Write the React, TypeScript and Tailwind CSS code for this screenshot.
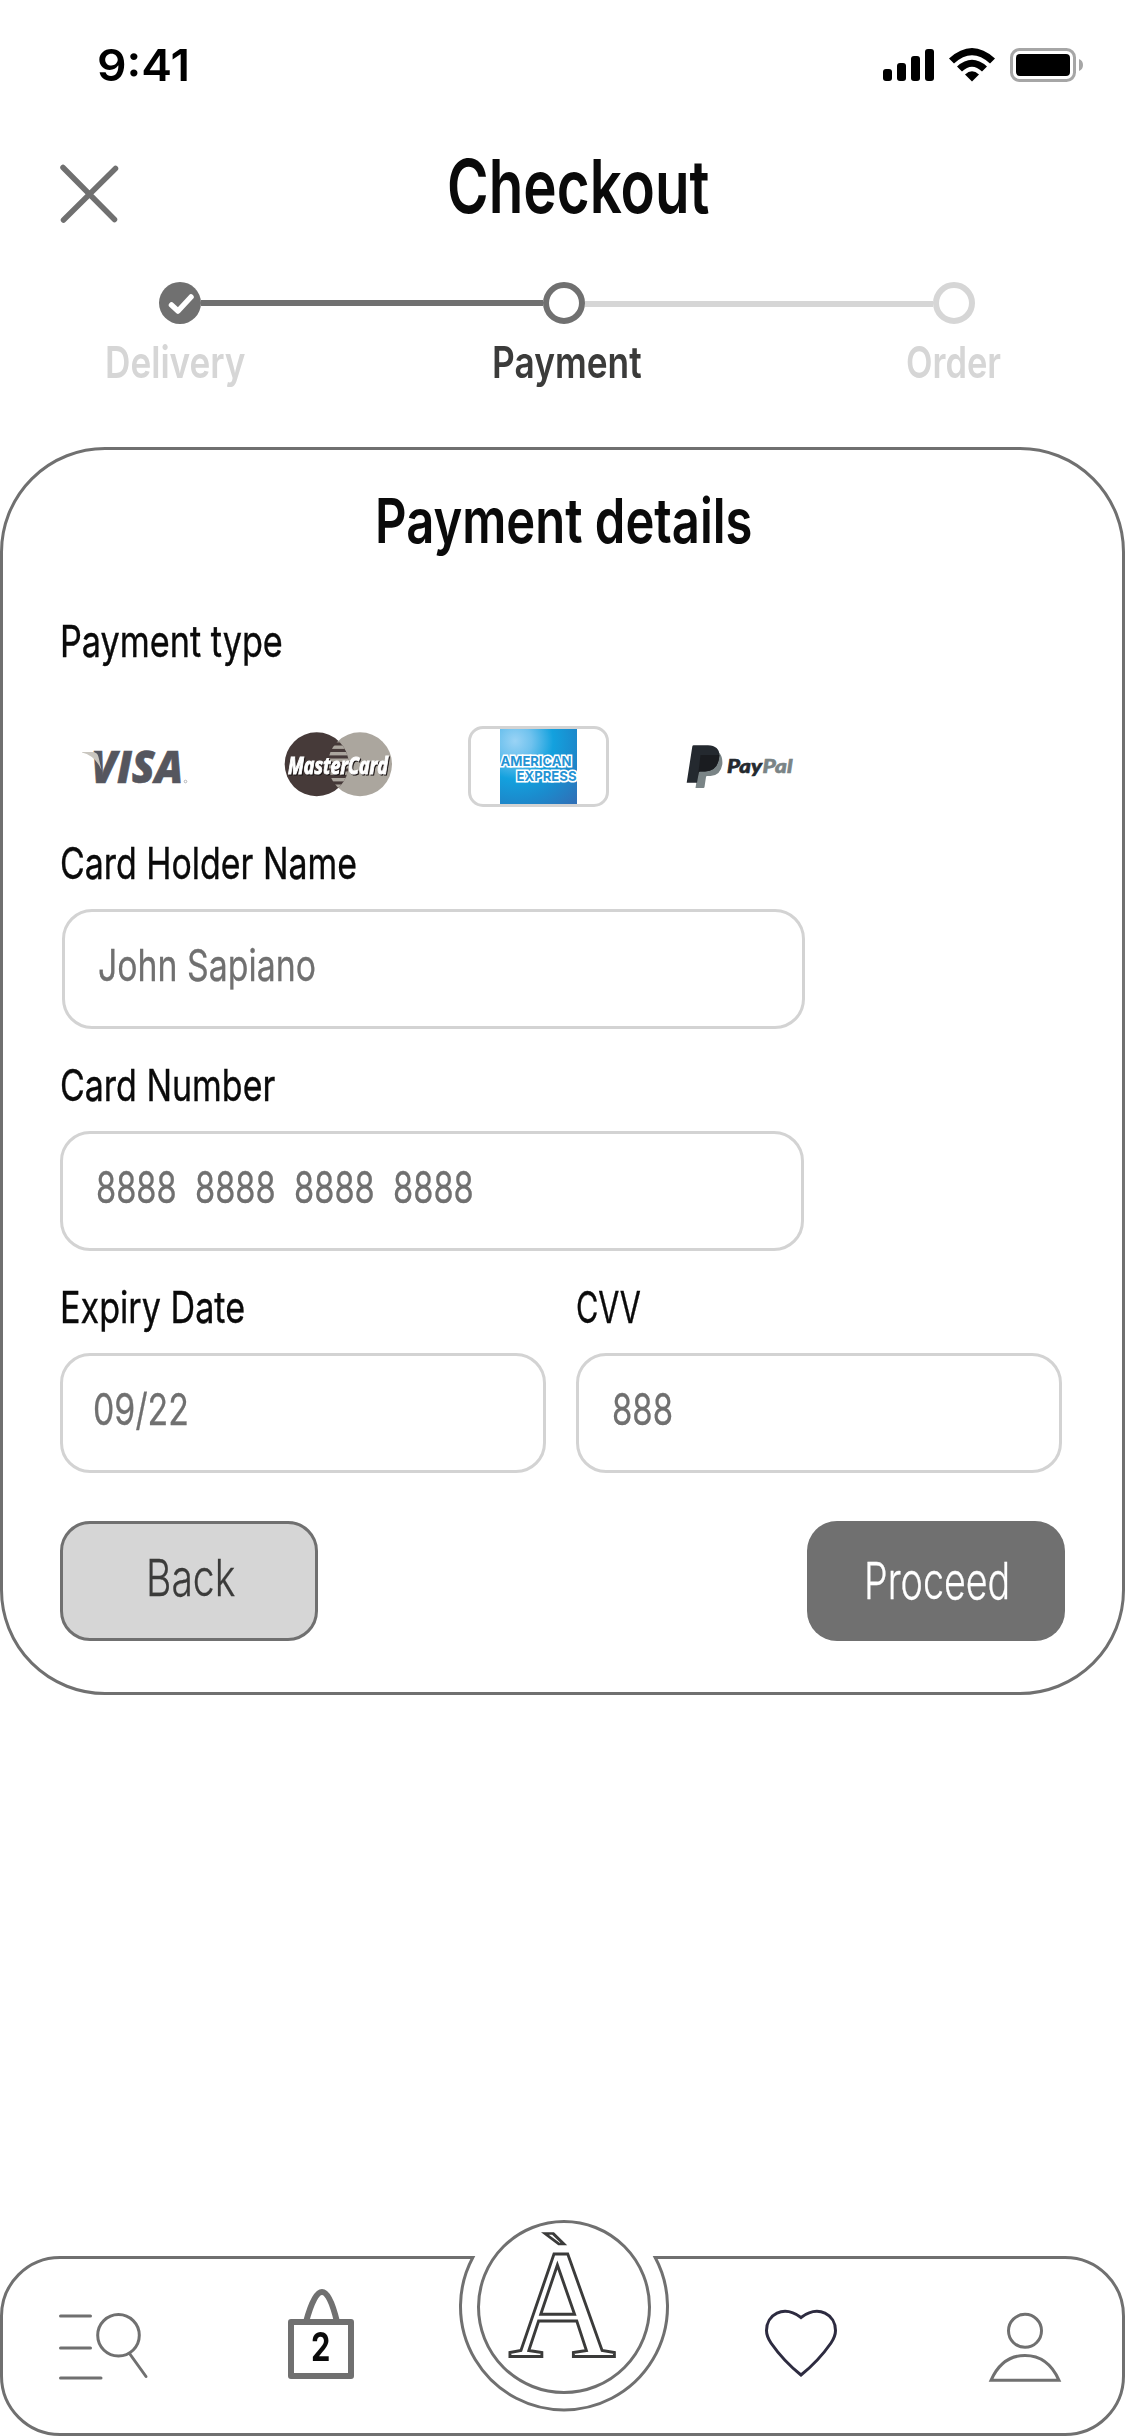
import React from 'react';

// Condensed text: the outer box reserves the visible width, the inner one is squeezed horizontally.
function Txt({ c, w, children }: { c: string; w: string; children: React.ReactNode }) {
  return (
    <span className={'block shrink-0 ' + w}>
      <span className={'inline-block origin-left whitespace-pre ' + c}>{children}</span>
    </span>
  );
}

const label = 'text-[44.4px] leading-[48px] font-normal text-[#0a0a0a] [-webkit-text-stroke:0.4px] ';
const value = 'text-[44px] leading-[48px] font-normal text-[#707070] [-webkit-text-stroke:0.3px] ';
const step = 'text-[44.4px] leading-[48px] font-semibold ';
const field = 'flex h-[120px] items-center rounded-[30px] border-[3px] border-[#d3d3d3] pb-2 ';

function StatusBar() {
  return (
    <div className="flex h-[130px] shrink-0 items-center pl-[97px] pr-[42px]">
      <Txt w="w-[100px]" c="scale-x-[1.05] text-[44px] leading-[48px] font-semibold text-black">9:41</Txt>
      <svg className="ml-auto" width="200" height="34" viewBox="0 0 200 34">
        <rect x="0" y="21" width="9" height="12" rx="3" />
        <rect x="14" y="15" width="9" height="18" rx="3" />
        <rect x="28" y="8" width="9" height="25" rx="3" />
        <rect x="42" y="1" width="9" height="32" rx="3" />
        <path d="M66 10.5Q89 -10.5 112 10.5L107 15.5Q89 -1 71 15.5Z" />
        <path d="M74 18.5Q89 5 104 18.5L99 23.5Q89 14 79 23.5Z" />
        <path d="M82 26.5Q89 20 96 26.5L89 33.5Z" />
        <rect x="128.5" y="1.5" width="63" height="31" rx="8" fill="none" stroke="#a6a6a6" strokeWidth="3" />
        <rect x="133" y="6" width="54" height="22" rx="4" />
        <path d="M196 11q4 1.500 4 6t-4 6z" fill="#a6a6a6" />
      </svg>
    </div>
  );
}

function Stepper() {
  return (
    <>
      <div className="flex h-[95px] shrink-0 items-center pt-[39px] pb-[14px] pl-[159px]">
        <svg width="42" height="42" viewBox="0 0 42 42">
          <circle cx="21" cy="21" r="21" fill="#707070" />
          <path d="M12.500 23l6.500 6 13-14" fill="none" stroke="#fff" strokeWidth="5.500" strokeLinecap="round" strokeLinejoin="round" />
        </svg>
        <div className="h-[6px] w-[342px] bg-[#707070]" />
        <div className="size-[42px] rounded-full border-[6px] border-[#707070]" />
        <div className="mt-[2px] h-[6px] w-[348px] bg-[#d6d6d6]" />
        <div className="size-[42px] rounded-full border-[6px] border-[#d6d6d6]" />
      </div>
      <div className="flex h-[48px] shrink-0 pl-[105px]">
        <Txt w="w-[387px]" c={step + 'scale-x-[.792] text-[#d6d6d6]'}>Delivery</Txt>
        <Txt w="w-[414px]" c={step + 'scale-x-[.795] text-[#3b3b3a]'}>Payment</Txt>
        <Txt w="w-[100px]" c={step + 'scale-x-[.777] text-[#d6d6d6]'}>Order</Txt>
      </div>
    </>
  );
}

function Visa() {
  return (
    <svg className="overflow-visible" width="107" height="81" viewBox="0 0 107 81">
      <text x="10" y="57.300" textLength="92" lengthAdjust="spacingAndGlyphs" fill="#55565e" stroke="#55565e" strokeWidth=".6" fontFamily="Open Sans, sans-serif" fontStyle="italic" fontWeight="800" fontSize="43.400">VISA</text>
      <path d="M1 26h10q5.500 0 6.500 5l3 13Q14 29.500 1 26.500z" fill="#c9c6bf" />
      <circle cx="104.500" cy="55.500" r="1.300" fill="none" stroke="#a5a5a8" strokeWidth=".8" />
    </svg>
  );
}

function MasterCard() {
  const stripes = [13, 19.5, 26, 32.5, 39, 45.5, 52, 58.5];
  return (
    <svg className="overflow-visible" width="109" height="81" viewBox="0 0 109 81">
      <defs>
        <clipPath id="mcl"><circle cx="32.700" cy="38.300" r="32" /></clipPath>
        <clipPath id="mcr"><circle cx="76" cy="38.300" r="32" /></clipPath>
      </defs>
      <circle cx="76" cy="38.300" r="32" fill="#aba69e" />
      <circle cx="32.700" cy="38.300" r="32" fill="#463a39" />
      <g clipPath="url(#mcl)">
        <g clipPath="url(#mcr)">
          {stripes.map((y) => <rect key={y} x="44" y={y} width="22" height="3.400" fill="#aba69e" />)}
        </g>
      </g>
      <g fontFamily="Open Sans, sans-serif" fontStyle="italic" fontWeight="700" fontSize="22.500">
        <text x="4" y="47.500" textLength="100" lengthAdjust="spacingAndGlyphs" fill="#fff" stroke="#fff" strokeWidth="1" className="[filter:drop-shadow(1.5px_1.5px_0_#1b1515)]">MasterCard</text>
      </g>
    </svg>
  );
}

function Amex() {
  return (
    <div className="flex h-[81px] w-[141px] rounded-[15px] border-[3px] border-[#d3d3d3] pl-[29px]">
      <svg width="77" height="75" viewBox="0 0 77 75">
        <defs>
          <radialGradient id="ax" gradientUnits="userSpaceOnUse" cx="15" cy="12" r="85">
            <stop offset="0" stopColor="#9ad3f5" />
            <stop offset=".2" stopColor="#6fc2ee" />
            <stop offset=".45" stopColor="#13a1de" />
            <stop offset=".7" stopColor="#1b8bcd" />
            <stop offset="1" stopColor="#2f71b8" />
          </radialGradient>
        </defs>
        <rect width="77" height="75" fill="url(#ax)" />
        <g fontFamily="Inter, sans-serif" fontWeight="700" fontSize="13.600" fill="#2493d4" stroke="#fff" strokeWidth="3.200" paintOrder="stroke" strokeLinejoin="miter" strokeMiterlimit="2">
          <text x=".5" y="36.800" textLength="71" lengthAdjust="spacingAndGlyphs">AMERICAN</text>
          <text x="16.500" y="52.300" textLength="60" lengthAdjust="spacingAndGlyphs">EXPRESS</text>
        </g>
      </svg>
    </div>
  );
}

function PayPal() {
  return (
    <svg className="overflow-visible" width="107" height="81" viewBox="0 0 107 81">
      <path d="M14.500 29L33.300 27Q37 31 36.300 38.500Q34.500 49.500 24.500 50h-3.500q-.8 0-1 1L18.500 61Q18.300 62 17.500 62H9.500z" fill="#7a8486" />
      <path d="M6.300 20.500Q6.500 19.300 7.700 19.300H22Q33.500 19.800 33.400 29.500 32.500 45 19 45.500H14q-1 0-1.200 1L11 56.800H.7z" fill="#24292f" />
      <path d="M14.500 29H33.400Q32.500 45 19 45.500H14q-1 0-1.200 1L12 50z" fill="#1a1c20" />
      <g fontFamily="Lato, sans-serif" fontStyle="italic" fontWeight="900" fontSize="19.300" strokeWidth=".6">
        <text x="41" y="46.700" textLength="35" lengthAdjust="spacingAndGlyphs" fill="#24292f" stroke="#24292f">Pay</text>
        <text x="76.500" y="46.700" textLength="30" lengthAdjust="spacingAndGlyphs" fill="#7a8486" stroke="#7a8486">Pal</text>
      </g>
    </svg>
  );
}

function PaymentCard() {
  return (
    <section className="mt-[61px] flex h-[1248px] shrink-0 flex-col rounded-[105px] border-[3px] border-[#707070] pt-[39px] pl-[57px] pr-[57px]">
      <div className="flex pl-[315px]">
        <Txt w="w-[376px]" c="scale-x-[.791] text-[61.9px] leading-[64px] font-semibold text-[#0a0a0a]">Payment details</Txt>
      </div>
      <div className="mt-16 flex"><Txt w="w-[222px]" c={label + 'scale-x-[.771]'}>Payment type</Txt></div>
      <div className="mt-[61px] flex pl-[21px]">
        <Visa />
        <div className="ml-[96px]"><MasterCard /></div>
        <div className="ml-[75px]"><Amex /></div>
        <div className="ml-[77px]"><PayPal /></div>
      </div>
      <div className="mt-8 flex"><Txt w="w-[300px]" c={label + 'scale-x-[.764]'}>Card Holder Name</Txt></div>
      <div className={field + 'mt-[22px] ml-[2px] w-[743px] pl-[33px]'}><Txt w="w-[220px]" c={value + 'scale-x-[.769]'}>John Sapiano</Txt></div>
      <div className="mt-8 flex"><Txt w="w-[220px]" c={label + 'scale-x-[.765]'}>Card Number</Txt></div>
      <div className={field + 'mt-[22px] w-[744px] pl-[33px]'}><Txt w="w-[376px]" c={value + 'scale-x-[.741]'}>8888  8888  8888  8888</Txt></div>
      <div className="mt-8 flex gap-[30px]">
        <div className="w-[486px]">
          <Txt w="w-[190px]" c={label + 'scale-x-[.769]'}>Expiry Date</Txt>
          <div className={field + 'mt-[22px] pl-[30px]'}><Txt w="w-[100px]" c={value + 'scale-x-[.77]'}>09/22</Txt></div>
        </div>
        <div className="w-[486px]">
          <Txt w="w-[70px]" c={label + 'scale-x-[.688]'}>CVV</Txt>
          <div className={field + 'mt-[22px] pl-[33px]'}><Txt w="w-[64px]" c={value + 'scale-x-[.747]'}>888</Txt></div>
        </div>
      </div>
      <div className="mt-12 flex w-[1005px] justify-between">
        <button className="flex h-[120px] w-[258px] items-center rounded-[30px] border-[3px] border-[#707070] bg-[#d6d6d6] pb-[6px] pl-[83px]">
          <Txt w="w-[92px]" c="scale-x-[.768] text-[50.9px] leading-[56px] font-light text-[#3b3b3a] [-webkit-text-stroke:0.3px]">Back</Txt>
        </button>
        <button className="flex h-[120px] w-[258px] items-center rounded-[30px] bg-[#707070] pl-[57px]">
          <Txt w="w-[146px]" c="scale-x-[.74] text-[50.9px] leading-[56px] font-light text-white [-webkit-text-stroke:0.3px]">Proceed</Txt>
        </button>
      </div>
    </section>
  );
}

function NavBar() {
  return (
    <nav className="relative mt-auto flex h-[180px] shrink-0 items-start rounded-[60px] border-[3px] border-[#707070]">
      <svg className="mt-[49px] ml-[53px]" width="96" height="76" viewBox="0 0 96 76" fill="none" stroke="#707070" strokeWidth="3" strokeLinecap="round">
        <path d="M4.500 8H34.500M4.500 40H34.500M4.500 70H45" />
        <circle cx="62.500" cy="27.300" r="20.800" />
        <path d="M73.500 45.500L90 68.500" />
      </svg>
      <div className="relative mt-[26px] ml-[136px] h-[100px] w-[66px]">
        <svg width="66" height="100" viewBox="0 0 66 100" fill="none" stroke="#707070" strokeWidth="6">
          <rect x="3" y="37" width="60" height="54" strokeLinejoin="round" />
          <path d="M18 37Q26 7 34 7T49 37" />
        </svg>
        <span className="absolute top-[42px] left-[23px] block origin-left scale-x-[.79] text-[39px] leading-[40px] font-bold text-[#0a0a0a]">2</span>
      </div>
      <svg className="absolute -top-[42px] left-[453px]" width="216" height="200" viewBox="456 2217 216 200" fill="none" stroke="#707070" strokeWidth="3">
        <path d="M473.500 2250H653.500L654 2259.500H473.500Z" fill="#fff" stroke="none" />
        <path d="M470 2257.500H472.800A103.500 103.500 0 1 0 655.200 2257.500H658" />
        <circle cx="564" cy="2307" r="85.500" fill="#fff" />
        <g stroke="#3b3b3a" strokeLinejoin="miter">
          <text x="508.500" y="2355.500" fontFamily="Liberation Serif, serif" fontSize="154" textLength="107" lengthAdjust="spacingAndGlyphs">A</text>
          <text transform="translate(537.800 2280.300) scale(.9 .6)" strokeWidth="3.800" fontFamily="DejaVu Serif, serif" fontSize="95">`</text>
        </g>
      </svg>
      <svg className="mt-[48px] ml-[407px]" width="80" height="76" viewBox="0 0 80 76" fill="none" stroke="#2d2b40" strokeWidth="3">
        <path d="M40 10.500C22 -3 5.500 8 5.500 23.500C5.500 28 7 31.500 10 36C18 47.500 30 60 40 68C50 60 62 47.500 70 36C73 31.500 74.500 28 74.500 23.500C74.500 8 58 -3 40 10.500Z" />
      </svg>
      <svg className="mt-[50px] ml-[144px]" width="80" height="76" viewBox="0 0 80 76" fill="none" stroke="#707070" strokeWidth="3">
        <circle cx="40" cy="21.800" r="16.500" />
        <path d="M6 71.300Q17 46.500 40 46.500T74 71.300Z" />
      </svg>
    </nav>
  );
}

export default function App() {
  return (
    <main className="flex h-[2436px] w-[1125px] flex-col overflow-hidden bg-white font-['Inter',sans-serif]">
      <StatusBar />
      <header className="flex h-[113px] shrink-0 items-center pl-[58px]">
        <svg className="mt-[15px]" width="62" height="60" viewBox="0 0 62 60" fill="none" stroke="#707070" strokeWidth="5.500" strokeLinecap="round">
          <path d="M5 3.500L56.500 55.500M57.500 4.500L5.500 56" />
        </svg>
        <div className="-mt-[2px] ml-[327px]"><Txt w="w-[264px]" c="scale-x-[.764] text-[74px] leading-[80px] font-semibold text-[#0a0a0a]">Checkout</Txt></div>
      </header>
      <Stepper />
      <PaymentCard />
      <NavBar />
    </main>
  );
}
